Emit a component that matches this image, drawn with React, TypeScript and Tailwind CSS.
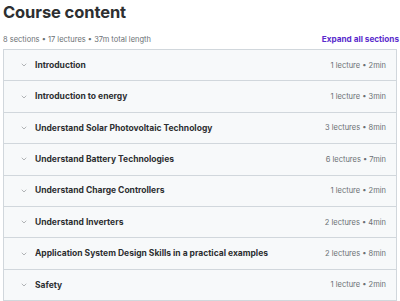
import { ChevronDown } from 'lucide-react';

const sections = [
  { title: 'Introduction', meta: '1 lecture • 2min' },
  { title: 'Introduction to energy', meta: '1 lecture • 3min' },
  { title: 'Understand Solar Photovoltaic Technology', meta: '3 lectures • 8min' },
  { title: 'Understand Battery Technologies', meta: '6 lectures • 7min' },
  { title: 'Understand Charge Controllers', meta: '1 lecture • 2min' },
  { title: 'Understand Inverters', meta: '2 lectures • 4min' },
  { title: 'Application System Design Skills in a practical examples', meta: '2 lectures • 8min' },
  { title: 'Safety', meta: '1 lecture • 2min' },
];

export default function App() {
  return (
    <div className="w-[400px] h-[301px] overflow-hidden bg-white text-[#2d2f31] font-['Inter',sans-serif]">
      <h2 className="pl-[3px] pt-[1px] text-[16.5px] font-bold leading-[22px] tracking-[-0.1px]">Course content</h2>
      <div className="mt-[10px] flex items-center justify-between pl-[3px] h-[13px]">
        <span className="text-[7.5px] text-[#6a6f73]">8 sections • 17 lectures • 37m total length</span>
        <span className="text-[8.2px] font-bold text-[#5a2bcc] whitespace-nowrap pr-[1px]">Expand all sections</span>
      </div>
      <div className="mt-[3px] mx-[3px] border border-[#d1d7dc] border-b-0">
        {sections.map((s) => (
          <div
            key={s.title}
            className="flex items-center h-[31.4px] bg-[#f7f9fa] border-b border-[#d1d7dc] pl-[16px] pr-[10px]"
          >
            <ChevronDown size={8} strokeWidth={1.5} className="text-[#6a6f73] shrink-0" />
            <span className="ml-[7px] text-[8.5px] font-bold flex-1 truncate">{s.title}</span>
            <span className="text-[7.5px] text-[#6a6f73] whitespace-nowrap">{s.meta}</span>
          </div>
        ))}
      </div>
    </div>
  );
}
